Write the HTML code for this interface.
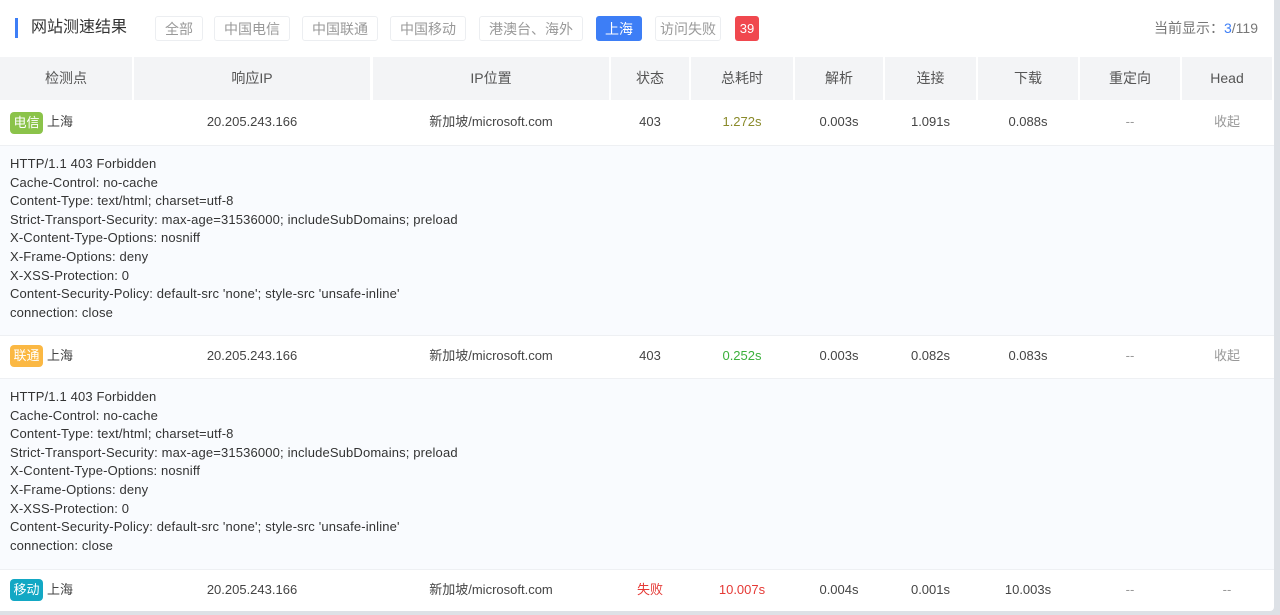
<!DOCTYPE html>
<html><head><meta charset="utf-8"><style>
*{margin:0;padding:0;box-sizing:border-box}
body{width:1280px;height:615px;background:#dde1e6;font-family:"Liberation Sans","Noto Sans CJK SC",sans-serif;color:#333;overflow:hidden;position:relative}
.card{position:absolute;left:0;top:0;width:1274px;height:611px;background:#fff;border-radius:0 0 4px 0}
.bar{position:absolute;left:15px;top:18px;width:3px;height:20px;background:#3d7ef6}
.title{position:absolute;left:31px;top:16px;font-size:16px;line-height:24px;color:#333}
.btn{position:absolute;top:16px;height:25px;line-height:25px;border:1px solid #eceef1;border-radius:3px;font-size:14px;color:#999;text-align:center}
.btn.on{background:#3d7ef6;color:#fff;border-color:#3d7ef6}
.badge{position:absolute;left:735px;top:16px;width:24px;height:25px;line-height:25px;background:#f0484e;color:#fff;font-size:13px;text-align:center;border-radius:3px}
.cur{position:absolute;right:16px;top:18px;font-size:14px;color:#777}
.cur b{font-weight:normal;color:#3d7ef6}
.h{position:absolute;top:57px;height:43px;line-height:43px;background:#f3f4f6;font-size:14px;color:#555;text-align:center}
.c{position:absolute;height:20px;line-height:20px;font-size:13px;color:#444;text-align:center}
.row{position:absolute;left:0;width:1274px;background:#fff;border-bottom:1px solid #eef0f3}
.det{position:absolute;left:0;width:1274px;background:#f9fbfe;border-bottom:1px solid #eef0f3;padding:9px 0 0 10px;font-size:13px;line-height:18.6px;color:#333;letter-spacing:0.15px}
.tag{position:absolute;left:10px;height:22px;line-height:22px;width:33px;border-radius:4px;color:#fff;font-size:13px;text-align:center}
</style></head><body><div class="card">
<div class="bar"></div><div class="title">网站测速结果</div>
<div class="btn" style="left:155px;width:48px">全部</div>
<div class="btn" style="left:214px;width:76px">中国电信</div>
<div class="btn" style="left:302px;width:76px">中国联通</div>
<div class="btn" style="left:390px;width:76px">中国移动</div>
<div class="btn" style="left:479px;width:104px">港澳台、海外</div>
<div class="btn on" style="left:596px;width:46px">上海</div>
<div class="btn" style="left:655px;width:66px">访问失败</div>
<div class="badge">39</div>
<div class="cur">当前显示：<b>3</b>/119</div>

<div class="h" style="left:0;width:132px">检测点</div>
<div class="h" style="left:134px;width:236px">响应IP</div>
<div class="h" style="left:373px;width:236px">IP位置</div>
<div class="h" style="left:611px;width:78px">状态</div>
<div class="h" style="left:691px;width:102px">总耗时</div>
<div class="h" style="left:795px;width:88px">解析</div>
<div class="h" style="left:885px;width:91px">连接</div>
<div class="h" style="left:978px;width:100px">下载</div>
<div class="h" style="left:1080px;width:100px">重定向</div>
<div class="h" style="left:1182px;width:90px">Head</div>

<div class="row" style="top:101px;height:45px"></div>
<div class="tag" style="top:112px;background:#8bc34a">电信</div>
<div class="c" style="left:47px;top:112px">上海</div>
<div class="c" style="left:134px;width:236px;top:112px">20.205.243.166</div>
<div class="c" style="left:373px;width:236px;top:112px">新加坡/microsoft.com</div>
<div class="c" style="left:611px;width:78px;top:112px">403</div>
<div class="c" style="left:691px;width:102px;top:112px;color:#8a8a2a">1.272s</div>
<div class="c" style="left:795px;width:88px;top:112px">0.003s</div>
<div class="c" style="left:885px;width:91px;top:112px">1.091s</div>
<div class="c" style="left:978px;width:100px;top:112px">0.088s</div>
<div class="c" style="left:1080px;width:100px;top:112px;color:#999">--</div>
<div class="c" style="left:1182px;width:90px;top:112px;color:#999">收起</div>
<div class="det" style="top:146px;height:190px">HTTP/1.1 403 Forbidden<br>Cache-Control: no-cache<br>Content-Type: text/html; charset=utf-8<br>Strict-Transport-Security: max-age=31536000; includeSubDomains; preload<br>X-Content-Type-Options: nosniff<br>X-Frame-Options: deny<br>X-XSS-Protection: 0<br>Content-Security-Policy: default-src 'none'; style-src 'unsafe-inline'<br>connection: close</div>

<div class="row" style="top:336px;height:43px"></div>
<div class="tag" style="top:345px;background:#fbb843">联通</div>
<div class="c" style="left:47px;top:346px">上海</div>
<div class="c" style="left:134px;width:236px;top:346px">20.205.243.166</div>
<div class="c" style="left:373px;width:236px;top:346px">新加坡/microsoft.com</div>
<div class="c" style="left:611px;width:78px;top:346px">403</div>
<div class="c" style="left:691px;width:102px;top:346px;color:#3bb03b">0.252s</div>
<div class="c" style="left:795px;width:88px;top:346px">0.003s</div>
<div class="c" style="left:885px;width:91px;top:346px">0.082s</div>
<div class="c" style="left:978px;width:100px;top:346px">0.083s</div>
<div class="c" style="left:1080px;width:100px;top:346px;color:#999">--</div>
<div class="c" style="left:1182px;width:90px;top:346px;color:#999">收起</div>
<div class="det" style="top:379px;height:191px">HTTP/1.1 403 Forbidden<br>Cache-Control: no-cache<br>Content-Type: text/html; charset=utf-8<br>Strict-Transport-Security: max-age=31536000; includeSubDomains; preload<br>X-Content-Type-Options: nosniff<br>X-Frame-Options: deny<br>X-XSS-Protection: 0<br>Content-Security-Policy: default-src 'none'; style-src 'unsafe-inline'<br>connection: close</div>

<div class="tag" style="top:579px;background:#13a8c4">移动</div>
<div class="c" style="left:47px;top:580px">上海</div>
<div class="c" style="left:134px;width:236px;top:580px">20.205.243.166</div>
<div class="c" style="left:373px;width:236px;top:580px">新加坡/microsoft.com</div>
<div class="c" style="left:611px;width:78px;top:580px;color:#e53935">失败</div>
<div class="c" style="left:691px;width:102px;top:580px;color:#e53935">10.007s</div>
<div class="c" style="left:795px;width:88px;top:580px">0.004s</div>
<div class="c" style="left:885px;width:91px;top:580px">0.001s</div>
<div class="c" style="left:978px;width:100px;top:580px">10.003s</div>
<div class="c" style="left:1080px;width:100px;top:580px;color:#999">--</div>
<div class="c" style="left:1182px;width:90px;top:580px;color:#999">--</div>
</div></body></html>
